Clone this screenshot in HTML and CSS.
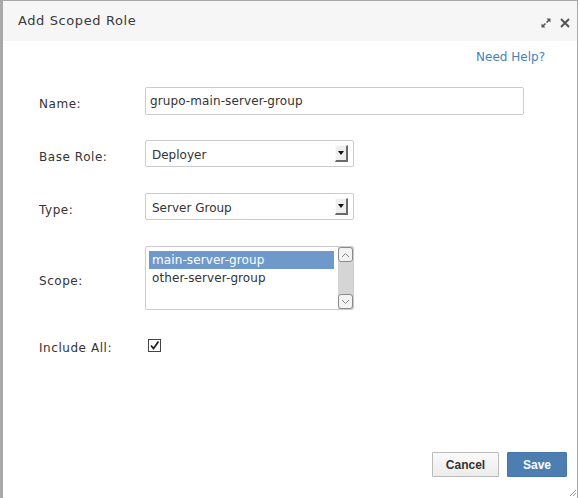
FILE: index.html
```html
<!DOCTYPE html>
<html>
<head>
<meta charset="utf-8">
<link rel="stylesheet" href="styles.css">
</head>
<body>
<div class="dialog">
  <div class="header">
    <span class="title">Add Scoped Role</span>
    <div class="tools">
      <svg class="icon" width="10" height="10" viewBox="0 0 10 10">
        <path d="M5.5 4.5 L8 2" fill="none" stroke="#555" stroke-width="1.6"/>
        <path d="M5.5 0.5 H9.5 V4.5 Z" fill="#555"/>
        <path d="M4.5 5.5 L2 8" fill="none" stroke="#555" stroke-width="1.6"/>
        <path d="M0.5 5.5 V9.5 H4.5 Z" fill="#555"/>
      </svg>
      <svg class="icon" width="10" height="10" viewBox="0 0 10 10">
        <path d="M1 1 L9 9 M9 1 L1 9" fill="none" stroke="#555" stroke-width="2"/>
      </svg>
    </div>
  </div>
  <div class="body">
    <div class="help-row"><a class="help" href="#">Need Help?</a></div>
    <div class="form">
      <div class="row row-name">
        <label class="label">Name:</label>
        <div class="input">grupo-main-server-group</div>
      </div>
      <div class="row row-base">
        <label class="label">Base Role:</label>
        <div class="select"><span class="select-text">Deployer</span><span class="arrow"><span class="tri"></span></span></div>
      </div>
      <div class="row row-type">
        <label class="label">Type:</label>
        <div class="select"><span class="select-text">Server Group</span><span class="arrow"><span class="tri"></span></span></div>
      </div>
      <div class="row row-list">
        <label class="label">Scope:</label>
        <div class="listbox">
          <div class="items">
            <div class="item selected">main-server-group</div>
            <div class="item">other-server-group</div>
          </div>
          <div class="scrollbar">
            <div class="sbtn"><svg width="9" height="6" viewBox="0 0 9 6"><path d="M1 5 L4.5 1.5 L8 5" fill="none" stroke="#888" stroke-width="1"/></svg></div>
            <div class="track"></div>
            <div class="sbtn"><svg width="9" height="6" viewBox="0 0 9 6"><path d="M1 1 L4.5 4.5 L8 1" fill="none" stroke="#888" stroke-width="1"/></svg></div>
          </div>
        </div>
      </div>
      <div class="row row-check">
        <label class="label">Include All:</label>
        <span class="checkbox"><svg width="11" height="11" viewBox="0 0 11 11"><path d="M2 5.5 L4.5 8.5 L9.5 1.5" fill="none" stroke="#222" stroke-width="1.8"/></svg></span>
      </div>
    </div>
  </div>
  <div class="footer">
    <button class="btn btn-cancel">Cancel</button>
    <button class="btn btn-save">Save</button>
  </div>
  <svg class="grip" width="6" height="6" viewBox="0 0 6 6">
    <path d="M0 6 L6 0 M3 6 L6 3" stroke="#999" stroke-width="1" fill="none"/>
  </svg>
</div>
</body>
</html>
```
FILE: styles.css
```css
html, body {
  margin: 0;
  padding: 0;
  background: #fff;
}
body {
  width: 580px;
  height: 498px;
  overflow: hidden;
  font-family: "DejaVu Sans", sans-serif;
  font-size: 12px;
  color: #333;
}
.dialog {
  position: relative;
  box-sizing: border-box;
  width: 578px;
  height: 498px;
  border-left: 3px solid #a9a9a9;
  border-top: 1px solid #a9a9a9;
  border-right: 1px solid #a9a9a9;
  display: flex;
  flex-direction: column;
  background: #fff;
}
.header {
  height: 40px;
  background: #f6f6f6;
  display: flex;
  align-items: center;
  justify-content: space-between;
  padding: 0 7px 0 15px;
  box-sizing: border-box;
}
.title {
  font-size: 13px;
  letter-spacing: 0.6px;
  color: #3a3a3a;
  line-height: 16px;
}
.tools {
  display: flex;
  gap: 9px;
  align-items: center;
  padding-top: 4px;
}
.icon {
  display: block;
}
.body {
  flex: 1;
  display: flex;
  flex-direction: column;
}
.help-row {
  display: flex;
  justify-content: flex-end;
  padding: 8px 32px 0 0;
  line-height: 16px;
}
.help {
  color: #4a7fb3;
  text-decoration: none;
  font-size: 12px;
}
.form {
  padding: 22px 0 0 36px;
  display: flex;
  flex-direction: column;
}
.row {
  display: flex;
  align-items: center;
}
.row-base {
  margin-top: 25px;
}
.row-type {
  margin-top: 26px;
}
.row-list {
  margin-top: 26px;
}
.row-check {
  margin-top: 24px;
}
.label {
  width: 106px;
  flex: none;
  padding-top: 6px;
  line-height: 16px;
  letter-spacing: 0.55px;
  color: #333;
}
.input {
  box-sizing: border-box;
  width: 379px;
  height: 28px;
  border: 1px solid #ccc;
  border-radius: 2px;
  padding: 0 4px;
  display: flex;
  align-items: center;
  line-height: 16px;
  letter-spacing: 0.1px;
  color: #333;
}
.select {
  box-sizing: border-box;
  width: 209px;
  height: 27px;
  border: 1px solid #ccc;
  border-radius: 2px;
  padding: 0 5px 0 6px;
  display: flex;
  align-items: center;
  justify-content: space-between;
  line-height: 16px;
}
.select-text {
  padding-top: 2px;
}
.arrow {
  box-sizing: border-box;
  width: 13px;
  height: 17px;
  background: #eeeeee;
  border-top: 1px solid #fafafa;
  border-left: 1px solid #fafafa;
  border-right: 2px solid #6a6a6a;
  border-bottom: 2px solid #6a6a6a;
  display: flex;
  align-items: center;
  justify-content: center;
}
.tri {
  width: 0;
  height: 0;
  border-left: 3px solid transparent;
  border-right: 3px solid transparent;
  border-top: 4px solid #111;
}
.listbox {
  box-sizing: border-box;
  width: 209px;
  height: 64px;
  border: 1px solid #ccc;
  border-radius: 2px;
  display: flex;
}
.items {
  flex: 1;
  padding: 4px 4px 0 3px;
}
.item {
  height: 18px;
  line-height: 18px;
  padding-left: 3px;
  letter-spacing: 0.1px;
  color: #333;
}
.item.selected {
  background: #7099cb;
  color: #fff;
}
.scrollbar {
  width: 15px;
  display: flex;
  flex-direction: column;
  background: #d5d5d5;
}
.sbtn {
  box-sizing: border-box;
  height: 15px;
  border: 1px solid #8a8a8a;
  border-radius: 3px;
  background: #f3f3f3;
  display: flex;
  align-items: center;
  justify-content: center;
}
.track {
  flex: 1;
}
.checkbox {
  box-sizing: border-box;
  width: 13px;
  height: 13px;
  border: 1px solid #444;
  background: #fff;
  margin-left: 3px;
  display: flex;
  align-items: center;
  justify-content: center;
}
.checkbox svg {
  display: block;
}
.footer {
  display: flex;
  justify-content: flex-end;
  gap: 8px;
  padding: 0 10px 21px 0;
}
.btn {
  box-sizing: border-box;
  height: 25px;
  font-family: "Liberation Sans", Arial, sans-serif;
  font-weight: bold;
  font-size: 12px;
  padding: 0;
  margin: 0;
  border-radius: 1px;
  cursor: pointer;
}
.btn-cancel {
  width: 67px;
  border: 1px solid #bbb;
  background: linear-gradient(#fafafa, #ececec);
  color: #333;
}
.btn-save {
  width: 60px;
  border: 1px solid #4677a9;
  background: #4c7eb2;
  color: #fff;
}
.grip {
  position: absolute;
  right: 1px;
  bottom: 2px;
}
```
